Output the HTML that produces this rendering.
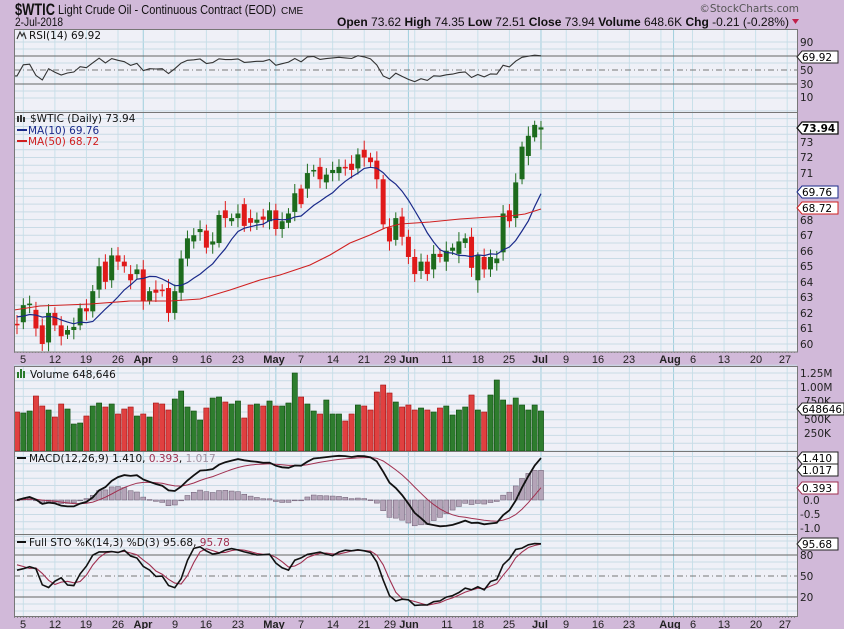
<!DOCTYPE html>
<html><head><meta charset="utf-8">
<style>
html,body{margin:0;padding:0;background:#d1b9d9;}
svg{display:block;font-family:"DejaVu Sans","Liberation Sans",sans-serif;}
.ax{font-size:10.5px;fill:#222;}
.lg{font-size:10.5px;fill:#111;}
.dt{font-size:11px;fill:#222;text-anchor:middle;font-family:"Liberation Sans",sans-serif;}
.mo{font-weight:bold;}
.tg{font-size:10.5px;}
.hd{font-family:"Liberation Sans",sans-serif;fill:#111;}
</style></head>
<body>
<svg id="s" width="844" height="629" xmlns="http://www.w3.org/2000/svg">
<rect width="844" height="629" fill="#d1b9d9"/>
<rect x="14" y="29" width="783" height="83" fill="#eff0f7"/>
<rect x="14" y="112" width="783" height="240" fill="#eff0f7"/>
<rect x="14" y="366" width="783" height="85" fill="#eff0f7"/>
<rect x="14" y="451" width="783" height="83" fill="#eff0f7"/>
<rect x="14" y="534" width="783" height="83" fill="#eff0f7"/>
<g id="grid"></g>
<g id="data"></g>
<g fill="none" stroke="#777" stroke-width="1">
<rect x="14.5" y="29.5" width="783" height="322.5"/>
<line x1="14" y1="112.5" x2="797" y2="112.5"/>
<rect x="14.5" y="366.5" width="783" height="250"/>
<line x1="14" y1="451.5" x2="797" y2="451.5"/>
<line x1="14" y1="534.5" x2="797" y2="534.5"/>
</g>
<g stroke="#888" stroke-dasharray="1,2">
<line x1="14" y1="352.5" x2="797" y2="352.5"/>
<line x1="14" y1="617.5" x2="797" y2="617.5"/>
</g>

<text x="15" y="15" class="hd" style="font-size:17px;font-weight:bold" textLength="40" lengthAdjust="spacingAndGlyphs">$WTIC</text>
<text x="58" y="14" class="hd" style="font-size:12.5px" textLength="218" lengthAdjust="spacingAndGlyphs">Light Crude Oil - Continuous Contract (EOD)</text>
<text x="281" y="14" class="hd" style="font-size:10px">CME</text>
<text x="15" y="26" class="hd" style="font-size:11.5px" textLength="48" lengthAdjust="spacingAndGlyphs">2-Jul-2018</text>
<text x="799" y="12" text-anchor="end" style="font-family:'DejaVu Sans',sans-serif;font-size:10.5px;fill:#555">©StockCharts.com</text>
<text x="337" y="26" class="hd" style="font-size:12px" textLength="452" lengthAdjust="spacingAndGlyphs"><tspan font-weight="bold">Open</tspan> 73.62 <tspan font-weight="bold">High</tspan> 74.35 <tspan font-weight="bold">Low</tspan> 72.51 <tspan font-weight="bold">Close</tspan> 73.94 <tspan font-weight="bold">Volume</tspan> 648.6K <tspan font-weight="bold">Chg</tspan> -0.21 (-0.28%)</text>
<polygon points="792,19 799,19 795.5,24" fill="#c0204a"/>

<path d="M17,39 l3,-7 l2,4 l2,-3 l2,6" stroke="#333" fill="none" stroke-width="1.2"/>
<text x="29" y="39" class="lg">RSI(14) 69.92</text>
<g fill="#333"><rect x="17" y="116" width="2" height="6"/><rect x="20" y="115" width="2" height="7"/><rect x="23" y="117" width="2" height="5"/></g>
<text x="30" y="122" class="lg">$WTIC (Daily) 73.94</text>
<line x1="17" y1="130" x2="27" y2="130" stroke="#1a2a8a" stroke-width="2"/>
<text x="28" y="134" class="lg" style="fill:#1a2a8a">MA(10) 69.76</text>
<line x1="17" y1="141" x2="27" y2="141" stroke="#d02020" stroke-width="2"/>
<text x="28" y="145" class="lg" style="fill:#d02020">MA(50) 68.72</text>
<g fill="#2a7a2a"><rect x="17" y="372" width="2" height="6"/><rect x="20" y="369" width="2" height="9"/><rect x="23" y="371" width="2" height="7"/></g>
<text x="30" y="378" class="lg">Volume 648,646</text>
<line x1="17" y1="458" x2="26" y2="458" stroke="#111" stroke-width="2"/>
<text x="29" y="462" class="lg">MACD(12,26,9) 1.410, <tspan style="fill:#a03050">0.393</tspan>, <tspan style="fill:#a090a0">1.017</tspan></text>
<line x1="17" y1="542" x2="26" y2="542" stroke="#111" stroke-width="2"/>
<text x="29" y="546" class="lg">Full STO %K(14,3) %D(3) 95.68, <tspan style="fill:#a03050">95.78</tspan></text>

<g class="ax">
<text x="800" y="46">90</text><text x="800" y="74">50</text><text x="800" y="88">30</text><text x="800" y="101">10</text>
<text x="800" y="146">73</text><text x="800" y="161">72</text><text x="800" y="177">71</text>
<text x="800" y="224">68</text><text x="800" y="239">67</text><text x="800" y="255">66</text><text x="800" y="270">65</text><text x="800" y="286">64</text><text x="800" y="301">63</text><text x="800" y="317">62</text><text x="800" y="332">61</text><text x="800" y="348">60</text>
<text x="800" y="377">1.25M</text><text x="800" y="391">1.00M</text><text x="804" y="405">750K</text><text x="804" y="423">500K</text><text x="804" y="437">250K</text>
<text x="803" y="504">0.0</text><text x="800" y="518">-0.5</text><text x="800" y="532">-1.0</text>
<text x="800" y="559">80</text><text x="800" y="580">50</text><text x="800" y="601">20</text>
</g>
<g class="tg">
<polygon points="797,57 802,51 838,51 838,63 802,63" fill="#fff" stroke="#222"/><text x="802" y="61">69.92</text>
<polygon points="797,128 802,122 838,122 838,134 802,134" fill="#fff" stroke="#111" stroke-width="1.3"/><text x="802" y="132" font-weight="bold">73.94</text>
<polygon points="797,192 802,186 838,186 838,198 802,198" fill="#fff" stroke="#1a2a8a"/><text x="802" y="196">69.76</text>
<polygon points="797,208 802,202 838,202 838,214 802,214" fill="#fff" stroke="#d02020"/><text x="802" y="212">68.72</text>
<polygon points="797,409 802,403 844,403 844,415 802,415" fill="#fff" stroke="#222"/><text x="802" y="413">648646.0</text>
<polygon points="797,458 802,452 838,452 838,464 802,464" fill="#fff" stroke="#222"/><text x="802" y="462">1.410</text>
<polygon points="797,470 802,464 838,464 838,476 802,476" fill="#fff" stroke="#222"/><text x="802" y="474">1.017</text>
<polygon points="797,488 802,482 838,482 838,494 802,494" fill="#fff" stroke="#a03050"/><text x="802" y="492">0.393</text>
<polygon points="797,544 802,538 838,538 838,550 802,550" fill="#fff" stroke="#222"/><text x="802" y="548">95.68</text>
</g>

<g class="dt">
<text x="23" y="363">5</text><text x="55" y="363">12</text><text x="86" y="363">19</text><text x="118" y="363">26</text><text x="143" y="363" class="mo">Apr</text><text x="175" y="363">9</text><text x="206" y="363">16</text><text x="238" y="363">23</text><text x="274" y="363" class="mo">May</text><text x="301" y="363">7</text><text x="333" y="363">14</text><text x="364" y="363">21</text><text x="390" y="363">29</text><text x="409" y="363" class="mo">Jun</text><text x="447" y="363">11</text><text x="478" y="363">18</text><text x="509" y="363">25</text><text x="540" y="363" class="mo">Jul</text><text x="566" y="363">9</text><text x="598" y="363">16</text><text x="629" y="363">23</text><text x="670" y="363" class="mo">Aug</text><text x="693" y="363">6</text><text x="724" y="363">13</text><text x="756" y="363">20</text><text x="785" y="363">27</text>
</g>
<g class="dt">
<text x="23" y="628">5</text><text x="55" y="628">12</text><text x="86" y="628">19</text><text x="118" y="628">26</text><text x="143" y="628" class="mo">Apr</text><text x="175" y="628">9</text><text x="206" y="628">16</text><text x="238" y="628">23</text><text x="274" y="628" class="mo">May</text><text x="301" y="628">7</text><text x="333" y="628">14</text><text x="364" y="628">21</text><text x="390" y="628">29</text><text x="409" y="628" class="mo">Jun</text><text x="447" y="628">11</text><text x="478" y="628">18</text><text x="509" y="628">25</text><text x="540" y="628" class="mo">Jul</text><text x="566" y="628">9</text><text x="598" y="628">16</text><text x="629" y="628">23</text><text x="670" y="628" class="mo">Aug</text><text x="693" y="628">6</text><text x="724" y="628">13</text><text x="756" y="628">20</text><text x="785" y="628">27</text>
</g>
</svg>
<script>
(function(){
var NS="http://www.w3.org/2000/svg";
var grid=document.getElementById("grid"),data=document.getElementById("data");
function el(p,t,a){var e=document.createElementNS(NS,t);for(var k in a)e.setAttribute(k,a[k]);p.appendChild(e);return e;}
function X(i){return 17+6.313*i;}
function hl(y,c,dash){var a={x1:14,x2:797,y1:y,y2:y,stroke:c,"stroke-width":1};if(dash)a["stroke-dasharray"]=dash;el(grid,"line",a);}
var weeks=[1,6,11,16,25,30,35,40,45,50,55,59,63,68,73,78,87,92,97,102,107,112,117,122];
var months=[20,41,62,83,104];
[[29,112],[112,352],[366,451],[451,534],[534,617]].forEach(function(r){
 weeks.forEach(function(i){el(grid,"line",{x1:X(i),x2:X(i),y1:r[0],y2:r[1],stroke:"#c9e1ea"});});
 months.forEach(function(i){el(grid,"line",{x1:X(i),x2:X(i),y1:r[0],y2:r[1],stroke:"#9fcfdd"});});
});
for(var v=10;v<=90;v+=10){var y=105-0.7*v;if(v==70||v==30)hl(y,"#666");else if(v==50)hl(y,"#777","6,3,1,3");else hl(y,"#c9dbe6");}
function P(p){return 344-(p-60)*15.54;}
for(var p=60;p<=75;p+=0.5)hl(P(p),"#c9dbe6");
for(var vv=0;vv<=1.4;vv+=0.125)hl(451-62.4*vv,"#c9dbe6");
for(var m=-1.25;m<=1.5;m+=0.25)hl(500-29*m,"#c9dbe6");
for(var s=0;s<=100;s+=10){var ys=611-0.7*s;if(s==80||s==20)hl(ys,"#666");else if(s==50)hl(ys,"#777","6,3,1,3");else hl(ys,"#c9dbe6");}

var D=[[61.3,61.2],[61.4,62.5],[62.5,62.6],[62.2,61.0],[61.2,60.0],[60.1,62.0],[62.0,61.2],[61.2,60.5],[60.6,60.9],[60.9,61.1],
[61.2,62.3],[62.3,62.1],[62.1,63.4],[63.5,65.0],[65.3,64.0],[64.1,65.7],[65.7,65.3],[65.3,65.0],[64.5,64.1],[64.5,64.8],
[64.8,62.8],[62.8,63.4],[63.5,63.3],[63.5,63.4],[63.6,62.0],[62.0,63.4],[63.3,65.5],[65.5,66.8],[66.6,67.0],[67.2,67.4],
[67.3,66.2],[66.4,66.6],[66.5,68.3],[68.6,68.1],[67.9,68.1],[68.1,68.4],[69.0,67.6],[68.1,67.8],[67.8,68.0],[68.2,68.0],
[67.9,68.6],[68.6,67.4],[67.4,67.9],[67.8,68.4],[68.5,69.7],[70.0,69.0],[70.0,71.0],[71.1,71.2],[71.4,70.6],[70.4,70.9],
[71.0,71.2],[71.0,71.4],[71.4,71.3],[71.6,71.2],[71.3,72.2],[72.5,72.0],[72.0,71.7],[71.8,70.6],[70.6,67.7],[67.5,66.6],
[66.7,68.1],[68.2,66.9],[66.9,65.6],[65.6,64.5],[64.7,65.3],[65.3,64.5],[64.8,65.8],[65.8,65.6],[65.3,66.0],[66.0,66.2],
[65.8,66.6],[66.5,66.8],[66.9,64.9],[64.1,65.7],[65.6,64.8],[64.8,65.6],[65.2,65.5],[65.9,68.4],[68.6,67.9],[68.1,70.4],
[70.6,72.7],[72.1,73.4],[73.3,74.1],[73.8,73.94]];
var N=D.length,PRE=40,all=[];
for(var k=0;k<PRE;k++){var c=61.8+0.5*Math.sin(k*0.7);all.push([c-0.2,c]);}
all=all.concat(D);
function w(i){return 0.25+0.35*Math.abs(Math.sin(i*1.7));}
var cl=all.map(function(d){return d[1];});
var hi=all.map(function(d,i){return Math.max(d[0],d[1])+w(i);});
var lo=all.map(function(d,i){return Math.min(d[0],d[1])-w(i);});
hi[all.length-1]=74.35;lo[all.length-1]=72.51;
hi[PRE+73]=65.9;lo[PRE+73]=63.3;
for(var i=0;i<N;i++){var o=D[i][0],c2=D[i][1],up=c2>=o,col=up?"#1d6b1d":"#e01a1a",x=X(i);
 el(data,"line",{x1:x,x2:x,y1:P(hi[PRE+i]),y2:P(lo[PRE+i]),stroke:col,"stroke-width":1});
 var t=P(Math.max(o,c2)),b=P(Math.min(o,c2));if(b-t<1.5)b=t+1.5;
 el(data,"rect",{x:x-2.5,y:t,width:5,height:b-t,fill:col});}
var pts=[];for(var i=0;i<N;i++){var sum=0;for(var j=0;j<10;j++)sum+=cl[PRE+i-j];pts.push(X(i).toFixed(1)+","+P(sum/10).toFixed(1));}
el(data,"polyline",{points:pts.join(" "),fill:"none",stroke:"#1a2a8a","stroke-width":1.2});
el(data,"polyline",{points:"14,310 40,306 90,304 130,301 170,301 200,299 230,290 260,280 280,275 310,265 330,255 350,243 370,235 385,228 400,224 430,222 460,219 490,217 510,216 525,214 541,209",fill:"none",stroke:"#d02020","stroke-width":1.1});
var ag=0,al=0,rsi=[];
for(var i=1;i<all.length;i++){var d=cl[i]-cl[i-1],g=d>0?d:0,l=d<0?-d:0;
 if(i<=14){ag+=g/14;al+=l/14;}else{ag=(ag*13+g)/14;al=(al*13+l)/14;}
 rsi[i]=al==0?100:100-100/(1+ag/al);}
pts=[];for(var i=0;i<N;i++)pts.push(X(i).toFixed(1)+","+(105-0.7*rsi[PRE+i]).toFixed(1));
pts.unshift("14,"+(105-0.7*rsi[PRE]).toFixed(1));
el(data,"polyline",{points:pts.join(" "),fill:"none",stroke:"#333","stroke-width":1.1});
var vt=[412,413,411,396,406,410,417,404,409,424,423,416,406,403,407,404,414,409,407,416,414,417,403,404,410,399,391,407,411,420,408,398,397,402,404,401,418,405,404,406,401,406,406,403,373,397,404,411,414,400,414,414,421,414,405,406,410,392,385,393,402,407,405,410,408,410,412,408,406,415,410,407,395,410,412,395,380,400,405,398,405,410,405,411];
for(var i=0;i<N;i++){var up=D[i][1]>=D[i][0],x=X(i);
 el(data,"rect",{x:x-2.6,y:vt[i],width:5.2,height:451-vt[i],fill:up?"#2e7d2e":"#e04040",stroke:up?"#0d4a0d":"#a01010","stroke-width":0.6});}
function ema(a,n){var k=2/(n+1),r=[a[0]];for(var i=1;i<a.length;i++)r.push(a[i]*k+r[i-1]*(1-k));return r;}
var e12=ema(cl,12),e26=ema(cl,26),macd=e12.map(function(v,i){return v-e26[i];}),sig=ema(macd,9);
function MY(v){return 500-29*v;}
for(var i=0;i<N;i++){var h=macd[PRE+i]-sig[PRE+i],y1=MY(h),y0=500;
 el(data,"rect",{x:X(i)-2.5,y:Math.min(y0,y1),width:5,height:Math.max(0.8,Math.abs(y1-y0)),fill:"#b4a4b8",stroke:"#6a5a70","stroke-width":0.5});}
pts=[];var p2=[];for(var i=0;i<N;i++){pts.push(X(i).toFixed(1)+","+MY(macd[PRE+i]).toFixed(1));p2.push(X(i).toFixed(1)+","+MY(sig[PRE+i]).toFixed(1));}
el(data,"polyline",{points:p2.join(" "),fill:"none",stroke:"#a03050","stroke-width":1});
el(data,"polyline",{points:pts.join(" "),fill:"none",stroke:"#111","stroke-width":1.8});
var raw=[];for(var i=0;i<all.length;i++){var hh=-1e9,ll=1e9;for(var j=Math.max(0,i-13);j<=i;j++){hh=Math.max(hh,hi[j]);ll=Math.min(ll,lo[j]);}raw.push((cl[i]-ll)/(hh-ll)*100);}
function sma(a,n){return a.map(function(v,i){var s=0,c=0;for(var j=Math.max(0,i-n+1);j<=i;j++){s+=a[j];c++;}return s/c;});}
var K=sma(raw,3),Dd=sma(K,3);
function SY(v){return 611-0.7*v;}
pts=[];p2=[];for(var i=0;i<N;i++){pts.push(X(i).toFixed(1)+","+SY(K[PRE+i]).toFixed(1));p2.push(X(i).toFixed(1)+","+SY(Dd[PRE+i]).toFixed(1));}
el(data,"polyline",{points:p2.join(" "),fill:"none",stroke:"#a03050","stroke-width":1.1});
el(data,"polyline",{points:pts.join(" "),fill:"none",stroke:"#111","stroke-width":1.6});
})();
</script>
</body></html>
